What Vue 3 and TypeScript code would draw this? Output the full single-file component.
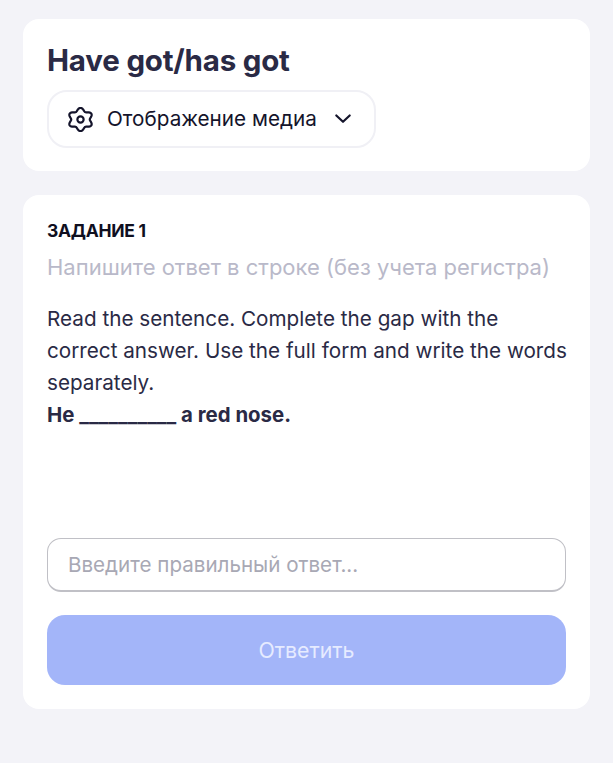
<script setup lang="ts">
const title = 'Have got/has got'

const gearPath = Array.from({ length: 120 }, (_, i) => {
  const t = (i / 120) * Math.PI * 2
  const r = 9.7 + 1.45 * Math.cos(6 * t)
  const x = 12 + 1.08 * r * Math.sin(t)
  const y = 12 - r * Math.cos(t)
  return `${i === 0 ? 'M' : 'L'}${x.toFixed(2)} ${y.toFixed(2)}`
}).join(' ') + ' Z'
</script>

<template>
  <main class="page">
    <section class="card head">
      <h1>{{ title }}</h1>
      <button class="media" type="button">
        <svg class="gear" width="25" height="25" viewBox="0 0 24 24" fill="none" stroke="#14142b" stroke-width="2.100" stroke-linejoin="round" stroke-linecap="round">
          <circle cx="12" cy="12" r="3" />
          <path :d="gearPath" />
        </svg>
        <span>Отображение медиа</span>
        <svg class="chev" width="18" height="18" viewBox="0 0 18 18" fill="none" stroke="#14142b" stroke-width="2.200" stroke-linecap="round" stroke-linejoin="round">
          <path d="M2.300 5.500l6.700 6.300 6.700-6.300" />
        </svg>
      </button>
    </section>

    <section class="card task">
      <h2>ЗАДАНИЕ 1</h2>
      <p class="hint">Напишите ответ в строке (без учета регистра)</p>
      <p class="body">
        Read the sentence. Complete the gap with the correct answer. Use the full form and write the words separately.<br />
        <strong>He __________ a red nose.</strong>
      </p>
      <input class="answer" type="text" placeholder="Введите правильный ответ..." />
      <button class="submit" type="button">Ответить</button>
    </section>
  </main>
</template>

<style>
html, body { margin: 0; background: #f3f3f8; }
</style>

<style scoped>
.page {
  min-height: 763px;
  box-sizing: border-box;
  padding: 19px 23px 0 23px;
  display: flex;
  flex-direction: column;
  gap: 24px;
  background: #f3f3f8;
  font-family: Inter, "Liberation Sans", sans-serif;
  color: #2a2a45;
}
.card {
  background: #fff;
  border-radius: 16px;
  padding: 24px;
}
.head {
  height: 152px;
  box-sizing: border-box;
  padding-top: 24px;
}
h1 {
  margin: 0 0 13px;
  font-size: 29.500px;
  line-height: 34px;
  font-weight: 700;
  letter-spacing: -0.2px;
  color: #2a2a45;
}
.media {
  width: 329px;
  height: 58px;
  box-sizing: border-box;
  display: flex;
  align-items: center;
  padding: 0 19px;
  background: #fff;
  border: 2px solid #f0f0f5;
  border-radius: 20px;
  font: 400 20.700px/24px Inter, sans-serif;
  color: #14142b;
}
.gear { flex: none; margin-right: 14px; }
.chev { flex: none; margin-left: 17px; }
.task {
  height: 514px;
  box-sizing: border-box;
  display: flex;
  flex-direction: column;
  padding: 24px;
}
h2 {
  margin: 0;
  font-size: 17.500px;
  line-height: 24px;
  font-weight: 700;
  letter-spacing: -0.3px;
  color: #0f0f1f;
}
.hint {
  margin: 12px 0 0;
  font-size: 22px;
  line-height: 24px;
  color: #b9b9c9;
}
.body {
  margin: 24px -6px 0 0;
  font-size: 20.700px;
  line-height: 32px;
  color: #2a2a45;
}
.body strong { font-weight: 700; font-size: 20.400px; }
.answer {
  margin-top: auto;
  width: 100%;
  height: 54px;
  box-sizing: border-box;
  padding: 0 20px;
  border: 1px solid #c0c0c6;
  border-bottom-width: 2px;
  border-radius: 14px;
  font: 400 20.600px Inter, sans-serif;
  outline: none;
}
.answer::placeholder { color: #a8a8b4; opacity: 1; }
.submit {
  margin-top: 23px;
  height: 70px;
  border: 0;
  border-radius: 18px;
  background: #a3b5f9;
  color: #e6ebff;
  font: 400 21.300px Inter, sans-serif;
}
</style>
